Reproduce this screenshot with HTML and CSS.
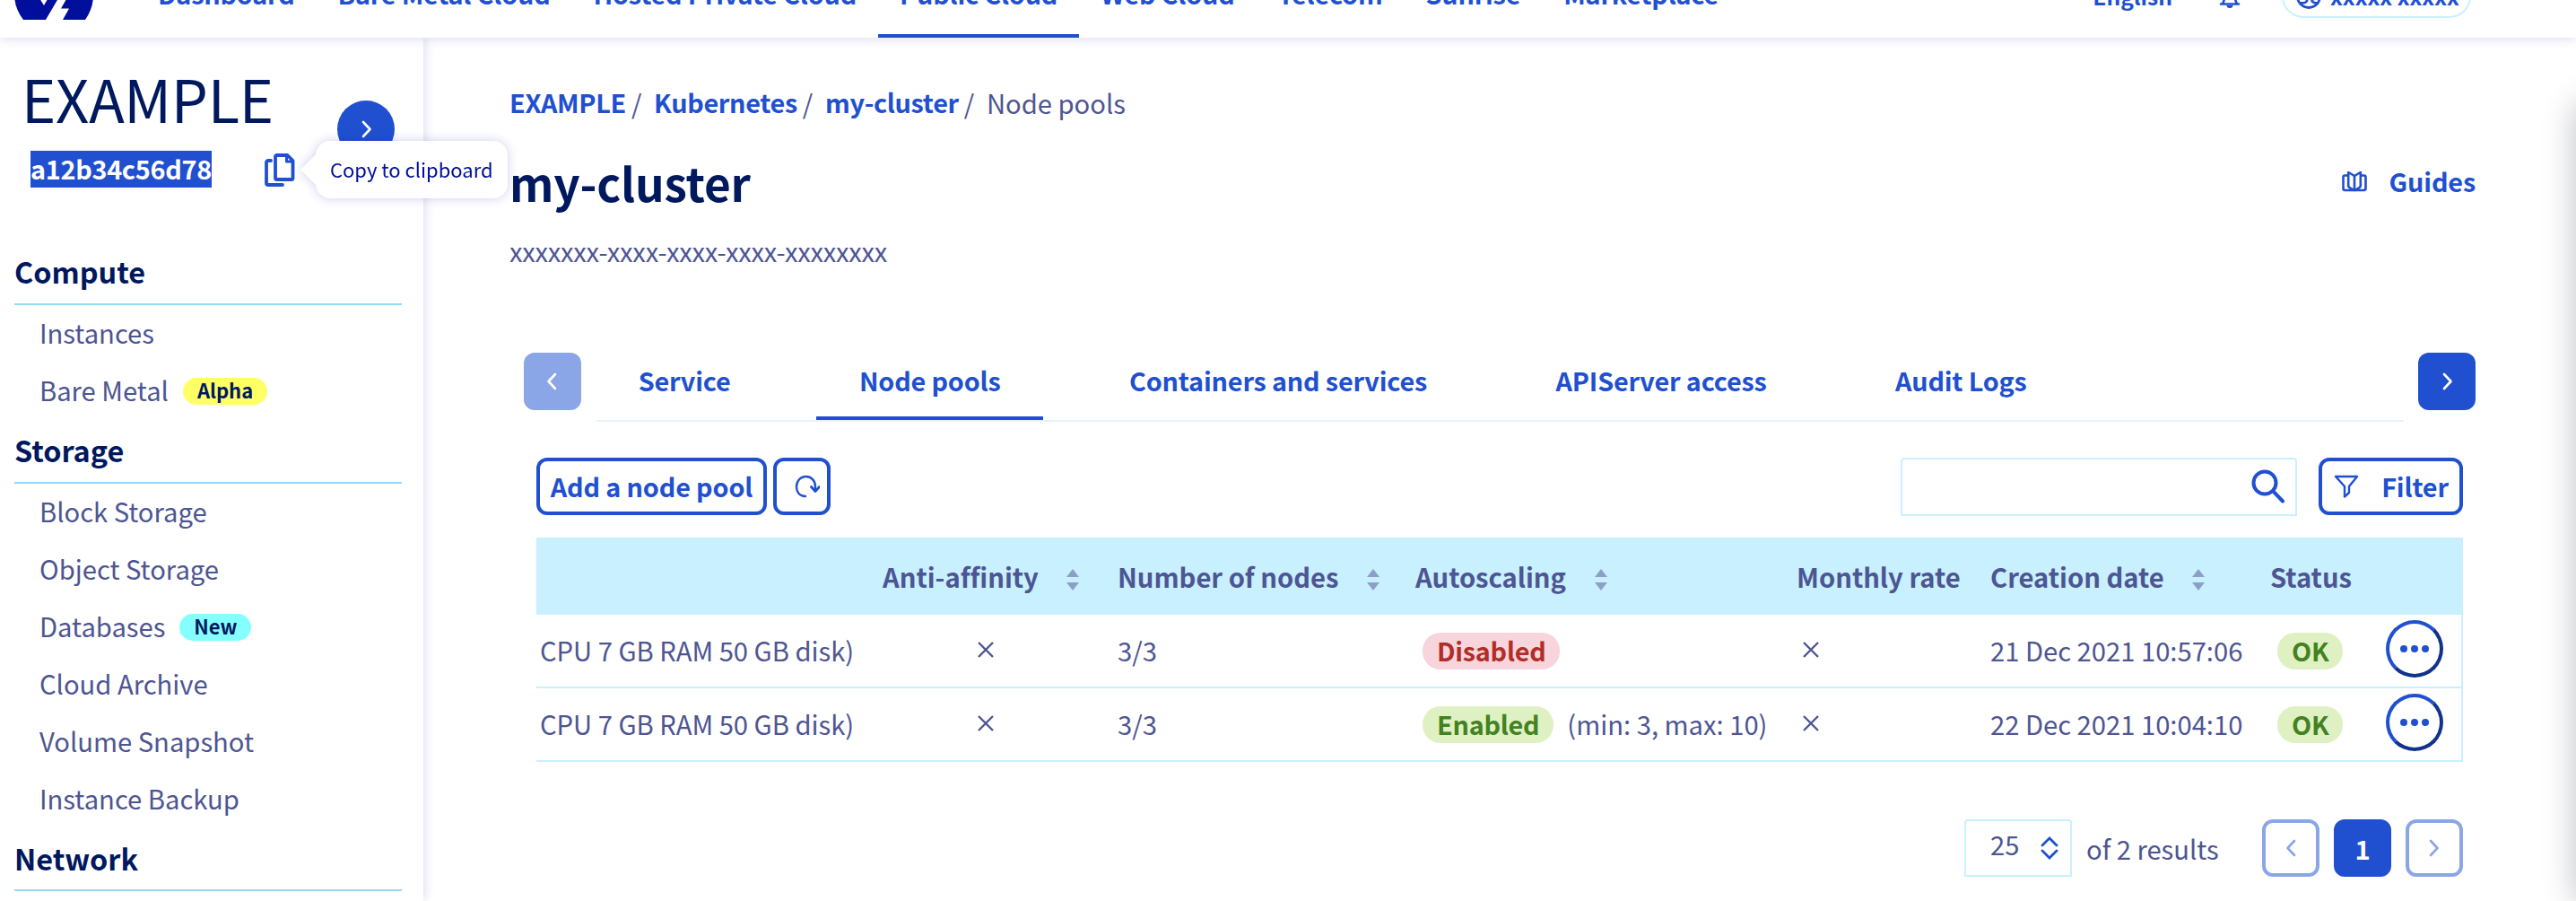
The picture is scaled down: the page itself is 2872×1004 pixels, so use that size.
FILE: index.html
```html
<!DOCTYPE html>
<html lang="en">
<head>
<meta charset="utf-8">
<title>my-cluster - Node pools</title>
<link rel="stylesheet" href="styles.css">
</head>
<body>
<header class="topbar">
  <svg class="logo" width="88" height="54" viewBox="0 0 88 54"><path d="M10 54C-3 37-3 17 9 0l24 38L55 0v20L35 54z"/><path d="M54 54l7-12.600h-9L76 0h3c12 17 12 37 0 54z"/></svg>
  <nav class="nav">
    <a>Dashboard</a><a>Bare Metal Cloud</a><a>Hosted Private Cloud</a><a class="active">Public Cloud</a><a>Web Cloud</a><a>Telecom</a><a>Sunrise</a><a>Marketplace</a>
  </nav>
  <div class="tools">
    <span class="lang">English</span>
    <svg class="bell" width="24" height="30" viewBox="0 0 24 30"><path d="M2 24.500h20M4 24c2-3 2.500-7 2.500-12a5.500 6 0 0 1 11 0c0 5 .5 9 2.500 12" fill="none" stroke="currentColor" stroke-width="2.600" stroke-linecap="round"/><path d="M8.500 26h7a3.500 3 0 0 1-7 0z" fill="currentColor"/></svg>
    <span class="user">
      <svg width="28" height="28" viewBox="0 0 28 28" fill="none" stroke="currentColor" stroke-width="2.800" stroke-linecap="round"><circle cx="14" cy="14" r="12.500"/><path d="M5 21.500c5 0 7.500-1 7-4l-3-2.500M24 21.500c-4 0-7-1-6.500-4l4.500-1"/></svg>
      <span>xxxxx xxxxx</span>
    </span>
  </div>
</header>
<div class="layout">
  <aside class="sidebar">
    <div class="project">
      <div class="project-info">
        <div class="project-name">EXAMPLE</div>
        <div class="project-id">
          <span class="selected">a12b34c56d78</span>
          <span class="copy">
            <svg width="34" height="38" viewBox="0 0 34 38" fill="none" stroke="currentColor" stroke-width="3.800" stroke-linejoin="round" stroke-linecap="round"><path d="M13.500 3h12l6 6v19.500a1.500 1.500 0 0 1-1.500 1.500H13.500a1.500 1.500 0 0 1-1.500-1.500v-24A1.500 1.500 0 0 1 13.500 3z"/><path d="M24.500 4v6h6" stroke-width="3"/><path d="M7 9H4a2 2 0 0 0-2 2v23a2 2 0 0 0 2 2h16"/></svg>
            <span class="tooltip">Copy to clipboard</span>
          </span>
        </div>
      </div>
      <span class="expand"><svg width="12" height="20" viewBox="0 0 12 20"><path d="M2 2l7.500 8L2 18"/></svg></span>
    </div>
    <h2>Compute</h2>
    <ul>
      <li><span>Instances</span></li>
      <li><span>Bare Metal</span><b class="tag alpha">Alpha</b></li>
    </ul>
    <h2>Storage</h2>
    <ul>
      <li><span>Block Storage</span></li>
      <li><span>Object Storage</span></li>
      <li><span>Databases</span><b class="tag new">New</b></li>
      <li><span>Cloud Archive</span></li>
      <li><span>Volume Snapshot</span></li>
      <li><span>Instance Backup</span></li>
    </ul>
    <h2>Network</h2>
  </aside>
  <main class="main">
    <div class="crumbs"><a>EXAMPLE</a><i>/</i><a>Kubernetes</a><i>/</i><a>my-cluster</a><i>/</i><span>Node pools</span></div>
    <div class="heading">
      <h1>my-cluster</h1>
      <a class="guides"><svg width="28" height="24" viewBox="0 0 28 24" fill="none" stroke="currentColor" stroke-width="2.600" stroke-linejoin="round"><path d="M7 5.500H3.500a2 2 0 0 0-2 2V20a2 2 0 0 0 2 2h21a2 2 0 0 0 2-2V7.500a2 2 0 0 0-2-2H21"/><path d="M14 6L7.200 2v15c0 3 4 3 6.800 5 2.800-2 6.800-2 6.800-5V2z"/><path d="M14 6v15"/></svg>Guides</a>
    </div>
    <p class="uuid">xxxxxxx-xxxx-xxxx-xxxx-xxxxxxxx</p>
    <div class="tabs">
      <span class="step disabled"><svg width="12" height="20" viewBox="0 0 12 20"><path d="M10 2l-7.500 8L10 18"/></svg></span>
      <div class="tablist"><a>Service</a><a class="active">Node pools</a><a>Containers and services</a><a>APIServer access</a><a>Audit Logs</a></div>
      <span class="step"><svg width="12" height="20" viewBox="0 0 12 20"><path d="M2 2l7.500 8L2 18"/></svg></span>
    </div>
    <section class="panel">
      <div class="toolbar">
        <span class="btn add">Add a node pool</span>
        <span class="btn refresh"><svg width="28" height="26" viewBox="0 0 28 26"><path d="M12 24C5 24 2 19 2 13.500 2 7 6.500 2 12.500 2S23 6.500 23 13v3" fill="none" stroke="currentColor" stroke-width="2.400" stroke-linecap="round"/><path d="M18.500 13.500l4.500 5 4.500-5" fill="none" stroke="currentColor" stroke-width="2.800" stroke-linecap="round" stroke-linejoin="round"/></svg></span>
        <span class="search"><svg width="38" height="38" viewBox="0 0 38 38" fill="none" stroke="currentColor" stroke-width="4" stroke-linecap="round"><circle cx="15" cy="15" r="12.500"/><path d="M24.500 24.500L35 35.500"/></svg></span>
        <span class="btn filter"><svg width="28" height="26" viewBox="0 0 28 26"><path d="M2 2h24L17 13v7l-5 4.500V13z" fill="none" stroke="currentColor" stroke-width="2.400" stroke-linejoin="round"/></svg>Filter</span>
      </div>
      <table>
        <colgroup><col class="c-name"><col class="c-anti"><col class="c-nodes"><col class="c-auto"><col class="c-month"><col class="c-date"><col class="c-status"><col class="c-act"></colgroup>
        <thead>
          <tr>
            <th></th>
            <th>Anti-affinity<svg class="sort" viewBox="0 0 14 24"><path d="M7 0l7 9H0zM0 15h14l-7 9z"/></svg></th>
            <th>Number of nodes<svg class="sort" viewBox="0 0 14 24"><path d="M7 0l7 9H0zM0 15h14l-7 9z"/></svg></th>
            <th>Autoscaling<svg class="sort" viewBox="0 0 14 24"><path d="M7 0l7 9H0zM0 15h14l-7 9z"/></svg></th>
            <th>Monthly rate</th>
            <th>Creation date<svg class="sort" viewBox="0 0 14 24"><path d="M7 0l7 9H0zM0 15h14l-7 9z"/></svg></th>
            <th>Status</th>
            <th></th>
          </tr>
        </thead>
        <tbody>
          <tr>
            <td class="name">CPU 7 GB RAM 50 GB disk)</td>
            <td><svg class="cross center" viewBox="0 0 20 20"><path d="M2 2l16 16M18 2L2 18"/></svg></td>
            <td>3/3</td>
            <td><b class="badge red">Disabled</b></td>
            <td><svg class="cross" viewBox="0 0 20 20"><path d="M2 2l16 16M18 2L2 18"/></svg></td>
            <td>21 Dec 2021 10:57:06</td>
            <td><b class="badge green">OK</b></td>
            <td><span class="more"><i></i><i></i><i></i></span></td>
          </tr>
          <tr>
            <td class="name">CPU 7 GB RAM 50 GB disk)</td>
            <td><svg class="cross center" viewBox="0 0 20 20"><path d="M2 2l16 16M18 2L2 18"/></svg></td>
            <td>3/3</td>
            <td><div class="scaling"><b class="badge green">Enabled</b><span class="range">(min: 3, max: 10)</span></div></td>
            <td><svg class="cross" viewBox="0 0 20 20"><path d="M2 2l16 16M18 2L2 18"/></svg></td>
            <td>22 Dec 2021 10:04:10</td>
            <td><b class="badge green">OK</b></td>
            <td><span class="more"><i></i><i></i><i></i></span></td>
          </tr>
        </tbody>
      </table>
      <div class="pager">
        <span class="size"><span>25</span><svg width="20" height="26" viewBox="0 0 20 26"><path d="M2 10l8-8 8 8M2 16l8 8 8-8"/></svg></span>
        <span class="total">of 2 results</span>
        <span class="page ghost"><svg width="12" height="20" viewBox="0 0 12 20"><path d="M10 2l-7.500 8L10 18"/></svg></span>
        <span class="page current">1</span>
        <span class="page ghost"><svg width="12" height="20" viewBox="0 0 12 20"><path d="M2 2l7.500 8L2 18"/></svg></span>
      </div>
    </section>
  </main>
</div>
<div class="drawer"></div>
</body>
</html>
```
FILE: styles.css
```css
:root {
  --blue: #2050d0;
  --navy: #00185e;
  --text: #4d5592;
  --line: #c8f0ff;
}
* { box-sizing: border-box; }
body {
  position: relative;
  margin: 0;
  height: 1004px;
  overflow: hidden;
  background: #fff;
  color: var(--text);
  font: 29.2px/40px "Noto Sans CJK SC", "Noto Sans", sans-serif;
}
svg { display: block; flex: none; }
h1, h2, p, ul { margin: 0; padding: 0; list-style: none; }
i { font-style: normal; }

/* Top bar */
.topbar {
  position: relative;
  z-index: 2;
  display: flex;
  align-items: center;
  height: 98px;
  margin-top: -56px;
  padding: 0 117px 0 16px;
  background: #fff;
  box-shadow: 0 0 12px rgba(0, 14, 156, .18);
  color: var(--blue);
  font-size: 28.8px;
  font-weight: 700;
}
.logo { fill: #000e9c; margin-top: 3px; }
.nav { display: flex; align-self: stretch; margin-left: 48px; letter-spacing: -.190px; }
.nav a {
  display: flex;
  align-items: center;
  padding: 0 24px;
  border-top: 4px solid transparent;
  border-bottom: 4px solid transparent;
}
.nav a.active { border-bottom-color: var(--blue); }
.tools { display: flex; align-items: center; margin-left: auto; font-size: 24.600px; }
.lang { padding-top: 4px; }
.bell { margin: 4px 46px 0 52px; }
.user {
  display: flex;
  align-items: center;
  gap: 10px;
  width: 211px;
  height: 48px;
  margin-top: 6px;
  padding-left: 14px;
  border: 2px solid var(--line);
  border-radius: 24px;
}
.user span { padding-bottom: 2px; white-space: nowrap; }

/* Page columns */
.layout { display: flex; height: 962px; }
.sidebar {
  position: relative;
  z-index: 1;
  width: 472px;
  padding: 0 24px 0 16px;
  box-shadow: 0 0 12px rgba(0, 14, 156, .18);
}

/* Project block */
.project { display: flex; justify-content: space-between; height: 227.400px; padding: 31px 8px 0; }
.project-name { color: var(--navy); font-size: 65px; letter-spacing: -.300px; line-height: 72px; }
.project-id { display: flex; align-items: center; margin: 23px 0 0 10px; }
.selected {
  width: 202px;
  height: 41px;
  background: var(--blue);
  color: #fff;
  font-size: 28.800px;
  font-weight: 700;
  letter-spacing: -.280px;
  line-height: 39px;
}
.copy { position: relative; margin-left: 59px; color: var(--blue); }
.tooltip {
  position: absolute;
  z-index: 3;
  left: 57px;
  top: -12.500px;
  width: 214px;
  height: 64px;
  padding-left: 16px;
  border-radius: 16px;
  background: #fff;
  color: #000e9c;
  filter: drop-shadow(0 0 6px rgba(0, 14, 156, .2));
  font-size: 22px;
  line-height: 63px;
  white-space: nowrap;
}
.tooltip::before {
  content: "";
  position: absolute;
  right: 100%;
  top: 15px;
  border: 17px solid transparent;
  border-left: 0;
  border-right-color: #fff;
}
.expand {
  display: flex;
  align-items: center;
  justify-content: center;
  width: 64px;
  height: 64px;
  margin-top: 39px;
  border-radius: 50%;
  background: var(--blue);
}
.expand svg, .step svg, .page svg { fill: none; stroke: #fff; stroke-width: 2.600; stroke-linecap: round; stroke-linejoin: round; }
.expand svg, .step svg { margin-left: 2px; }
.step.disabled svg { margin-left: -2px; }

/* Sidebar menu */
.sidebar h2 {
  height: 70.600px;
  padding-top: 10px;
  border-bottom: 2px solid #97d7fa;
  color: var(--navy);
  font-size: 32.400px;
  line-height: 45px;
}
.sidebar li { display: flex; align-items: center; height: 64px; padding-left: 28px; }
.sidebar li span { padding-bottom: 4px; }
.tag {
  height: 30px;
  margin-left: 16px;
  padding: 0 16px;
  border-radius: 15px;
  color: var(--navy);
  font-size: 22px;
  line-height: 27px;
}
.tag.alpha { background: #ffff66; }
.tag.new { background: #85fffd; }

/* Main column */
.main { flex: 1; padding: 51.300px 112px 0 96px; }
.crumbs { display: flex; padding-top: 1px; margin-bottom: -1px; }
.crumbs a { color: var(--blue); font-size: 28.800px; font-weight: 700; letter-spacing: -.320px; }
.crumbs i { margin: 0 13.700px 0 6px; }
.heading { display: flex; align-items: center; justify-content: space-between; height: 64px; margin-top: 37.300px; }
h1 { color: var(--navy); font-size: 51.300px; letter-spacing: -.200px; line-height: 64px; }
.guides { display: flex; align-items: center; gap: 25px; padding-bottom: 2px; color: var(--blue); font-size: 28.800px; font-weight: 700; letter-spacing: -.150px; }
.uuid { margin-top: 24.700px; letter-spacing: -.270px; }

.tabs { display: flex; gap: 16px; margin: 93.700px 0 0 16px; }
.step {
  display: flex;
  align-items: center;
  justify-content: center;
  width: 64px;
  height: 64px;
  border-radius: 12px;
  background: var(--blue);
}
.step.disabled { background: #8aa6e7; }
.tablist { display: flex; flex: 1; gap: 48px; height: 77px; border-bottom: 2px solid #e5f4fc; }
.tablist a {
  height: 75px;
  padding: 0 47.700px;
  border-bottom: 4px solid transparent;
  color: var(--blue);
  font-size: 28.800px;
  font-weight: 700;
  letter-spacing: -.170px;
  line-height: 61px;
}
.tablist a.active { border-bottom-color: var(--blue); }

/* Node pool panel */
.panel { margin: 40px 14px 0 30px; }
.toolbar { display: flex; height: 65px; margin-bottom: 24px; color: var(--blue); }
.btn {
  display: flex;
  align-items: center;
  justify-content: center;
  height: 64px;
  border: 4px solid var(--blue);
  border-radius: 12px;
  font-size: 28.800px;
  font-weight: 700;
  letter-spacing: -.150px;
}
.add { width: 257px; }
.refresh { width: 64px; margin-left: 7px; padding-left: 12px; }
.search {
  display: flex;
  align-items: center;
  justify-content: flex-end;
  width: 442px;
  margin: 0 24px 0 auto;
  padding-right: 11px;
  border: 2px solid var(--line);
  border-radius: 4px 4px 0 0;
}
.filter { width: 161px; gap: 25px; padding-left: 1px; }

table { width: 2148px; table-layout: fixed; border-collapse: separate; border-spacing: 0; border-right: 2px solid var(--line); }
.c-name { width: 386px; }
.c-anti { width: 262px; }
.c-nodes { width: 332px; }
.c-auto { width: 425px; }
.c-month { width: 216px; }
.c-date { width: 312px; }
.c-status { width: 121px; }
th, td { padding: 0; text-align: left; vertical-align: middle; white-space: nowrap; }
th { height: 86px; padding-top: 1px; background: var(--line); font-variant-ligatures: none; font-weight: 700; }
td { height: 82px; padding-bottom: 2px; border-bottom: 2px solid var(--line); }
.name { padding-left: 4px; }
.sort { display: inline-block; width: 14px; height: 24px; margin-left: 31.500px; vertical-align: -3px; fill: #8d9fc8; }
.cross { width: 20px; height: 20px; margin-left: 6px; stroke: var(--text); stroke-width: 2.400; }
.cross.center { margin-left: 105px; }
.badge {
  display: block;
  width: max-content;
  height: 41px;
  margin: 3px 0 0 8px;
  padding: 0 16px;
  border-radius: 20px;
  font-size: 28.800px;
  letter-spacing: -.250px;
  line-height: 39px;
}
.badge.red { background: #f8d4dc; color: #b02e28; }
.badge.green { background: #dff1c3; color: #43821f; }
.scaling { display: flex; align-items: center; gap: 15px; }
.range { padding-bottom: 0; }
.more {
  display: flex;
  align-items: center;
  justify-content: center;
  gap: 4px;
  width: 64px;
  height: 64px;
  margin: -2px 0 0 8px;
  border: 4px solid var(--blue);
  border-color: var(--blue) #12338c #12338c var(--blue);
  border-radius: 50%;
}
.more i { width: 8px; height: 8px; border-radius: 50%; background: var(--blue); }

/* Pagination */
.pager { display: flex; justify-content: flex-end; align-items: center; margin-top: 64px; }
.size {
  display: flex;
  align-items: center;
  justify-content: space-between;
  width: 120px;
  height: 64px;
  padding: 0 13px 0 27px;
  border: 2px solid var(--line);
  border-radius: 4px 4px 0 0;
}
.size span { padding-bottom: 9px; }
.size svg { fill: none; stroke: var(--blue); stroke-width: 2.800; stroke-linecap: round; }
.total { width: 196px; margin-left: 16px; }
.page {
  display: flex;
  align-items: center;
  justify-content: center;
  width: 64px;
  height: 64px;
  margin-left: 16px;
  border: 4px solid #8aa6e7;
  border-radius: 12px;
}
.total + .page { margin-left: 0; }
.page.ghost svg { stroke: #8aa6e7; }
.page.current { border-color: var(--blue); background: var(--blue); color: #fff; font-weight: 700; }

/* Edge of the closed side drawer */
.drawer {
  position: absolute;
  left: 100%;
  top: 116px;
  width: 40px;
  height: 888px;
  box-shadow: 0 0 36px rgba(0, 10, 30, .26);
}
```
